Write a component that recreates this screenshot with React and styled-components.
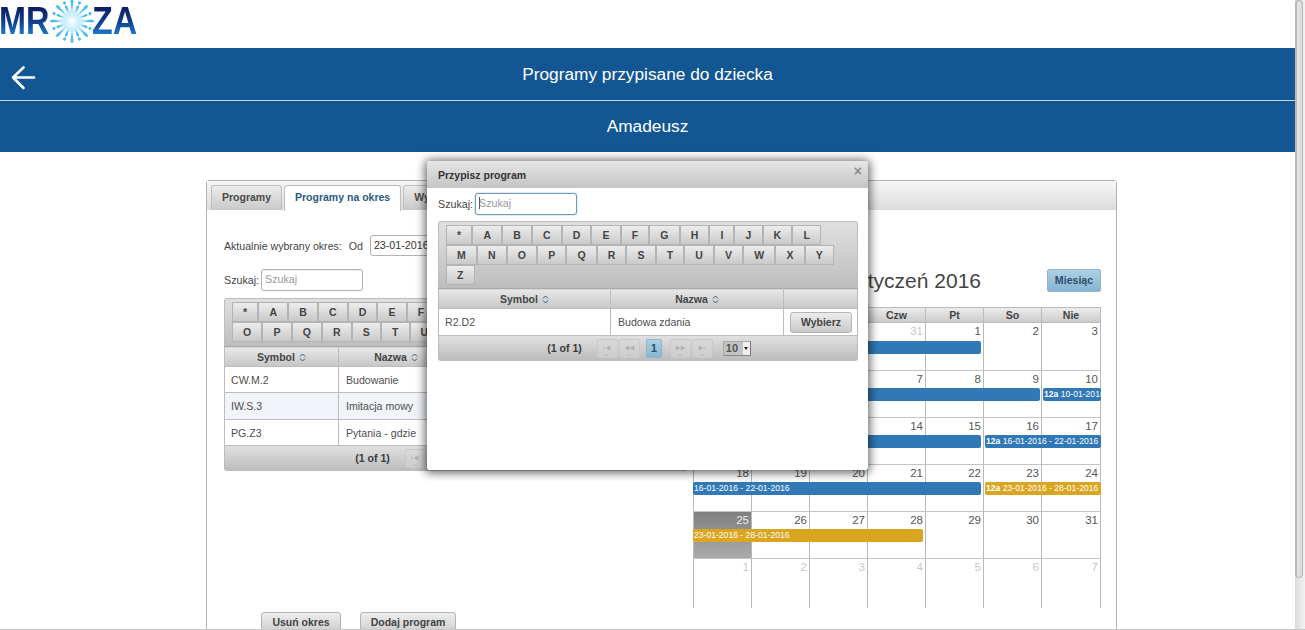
import React from 'react';
import styled, { createGlobalStyle } from 'styled-components';

const Global = createGlobalStyle`
  html, body { margin: 0; padding: 0; height: 630px; overflow: hidden; background: #fff; }
  body { font-family: "Liberation Sans", Arial, sans-serif; color: #444; }
  * { box-sizing: border-box; }
`;

const btnGrad = 'linear-gradient(to bottom, #ededed, #c9c9c9)';
const activeGrad = 'linear-gradient(to bottom, #aed0e4, #86b4d0)';

const Viewport = styled.div`
  position: relative; width: 1305px; height: 630px; overflow: hidden;
  display: flex; flex-direction: column;
`;
const Window = styled.div`display: flex; height: 629px; overflow: hidden;`;
const WindowEdge = styled.div`height: 1px; background: #c8c8c8;`;
const Page = styled.main`width: 1295px; flex: none; overflow: hidden;`;
const Scrollbar = styled.div`
  width: 10px; height: 629px; flex: none;
  background: linear-gradient(to right, #dcdcdc, #f2f2f2);
`;
const ScrollThumb = styled.div`
  width: 8px; height: 578px; border: 1px solid #b9b9b9; border-left-width: 2px; border-top-width: 1px;
  border-radius: 4px; background: linear-gradient(to right, #e6e6e6, #d8d8d8);
`;

const LogoBar = styled.div`height: 48px; display: flex; align-items: flex-start; background: #fff;`;
const LogoWord = styled.div`
  width: ${p => p.$w}px; height: 48px; flex: none; overflow: visible;
`;
const LogoText = styled.span`
  display: inline-block; transform-origin: 0 0; transform: translateX(${p => p.$dx || 0}px) scaleX(${p => p.$sx});
  font: bold 39px/42px "Liberation Sans", sans-serif; white-space: nowrap;
  background: linear-gradient(to bottom, #0b1f66 20%, #0f3c8a 50%, #1b79cc 82%);
  -webkit-background-clip: text; background-clip: text; color: transparent;
`;
const Flake = styled.svg`width: 50px; height: 48px; flex: none; margin-right: -5px; margin-left: -3px;`;

const Band = styled.header`
  background: #125694; color: #fff; position: relative;
  display: flex; align-items: center; justify-content: center;
  font-size: 17.3px; border-bottom: ${p => p.$rule ? '1px solid #c9d6e3' : '0'};
  height: ${p => p.$rule ? 53 : 51}px;
`;
const BackIcon = styled.svg`position: absolute; left: 10px; top: 17px; width: 26px; height: 26px;`;

const Panel = styled.section`
  margin: 28px 0 0 206px; width: 911px; height: 480px;
  border: 1px solid #b4b4b4; border-radius: 3px; background: #fff;
`;
const TabStrip = styled.nav`
  height: 29px; padding: 4px 0 0 4px; display: flex; gap: 2px;
  background: linear-gradient(to bottom, #f6f6f6, #dcdcdc);
`;
const Tab = styled.div`
  height: ${p => p.$active ? 26 : 25}px; padding: 0 10px; line-height: 23px;
  border: 1px solid #bdbdbd; border-bottom: 0; border-radius: 3px 3px 0 0;
  font-size: 10.5px; font-weight: bold;
  color: ${p => p.$active ? '#2b5a80' : '#4a4a4a'};
  background: ${p => p.$active ? '#fff' : 'linear-gradient(to bottom, #ececec, #c9c9c9)'};
`;
const Columns = styled.div`
  display: grid; grid-template-columns: 464px 408px; column-gap: 5px;
  padding: 25px 0 0 17px;
`;
const LeftCol = styled.div`min-width: 0;`;
const RightCol = styled.div`min-width: 0; padding-top: 34px;`;

const PeriodRow = styled.div`display: flex; align-items: center; height: 21px; font-size: 10.6px; gap: 7px;`;
const DateInput = styled.div`
  width: 100px; height: 21px; margin-left: 0; border: 1px solid #b4b4b4; border-radius: 3px;
  padding-left: 3px; line-height: 19px; font-size: 10.7px; color: #333;
`;
const SearchRow = styled.div`
  display: flex; align-items: center; gap: 2px; height: 22px; font-size: 10.7px;
  margin-top: ${p => p.$top}px;
`;
const SearchInput = styled.div`
  width: 102px; height: 22px; border-radius: 3px; padding-left: 3px; line-height: 19px;
  font-size: 10.7px; color: #999; background: #fff;
  border: 1px solid ${p => p.$focus ? '#6c9dbf' : '#b0b0b0'};
  box-shadow: ${p => p.$focus ? '0 0 2px #8fb8d4' : 'inset 0 1px 1px #eee'};
`;
const Caret = styled.span`border-left: 1px solid #555; margin-right: -1px;`;

const AlphaBar = styled.div`
  margin-top: ${p => p.$top}px; padding: 3px 12px ${p => p.$tail}px 7px;
  display: flex; flex-wrap: wrap; align-content: flex-start;
  border: 1px solid #bdbdbd; border-bottom: 0; border-radius: 3px 3px 0 0;
  background: linear-gradient(to bottom, #e0e0e0, #bdbdbd);
`;
const Letter = styled.div`
  height: 20px; padding: 0 10.1px; line-height: 18px; text-align: center;
  font-size: 10.5px; font-weight: bold; color: #444;
  border: 1px solid #b4b4b4; background: ${btnGrad};
`;

const Table = styled.table`
  width: 100%; table-layout: fixed; border-collapse: collapse; font-size: 10.6px;
  border-left: 1px solid #bdbdbd; border-right: 1px solid #bdbdbd;
`;
const HeadCell = styled.th`
  width: ${p => p.$w ? `${p.$w}px` : 'auto'}; height: 20px; padding: 0;
  font-size: 10.5px; font-weight: bold; color: #444; text-align: center;
  background: linear-gradient(to bottom, #e8e8e8, #c6c6c6);
  border: 1px solid #bdbdbd; border-top-color: #aaa;
  &:first-child { border-left: 0; } &:last-child { border-right: 0; }
`;
const SortIcon = styled.svg`width: 7px; height: 9px; margin-left: 4px; vertical-align: -1px;`;
const Row = styled.tr`background: ${p => p.$alt ? '#f1f4f9' : '#fff'};`;
const Cell = styled.td`
  height: ${p => p.$h}px; padding: 0 7px; color: #4e4e4e;
  border: 1px solid #bdbdbd; overflow: hidden; white-space: nowrap;
  &:first-child { border-left: 0; padding-left: 6px; } &:last-child { border-right: 0; }
`;
const ActionCell = styled(Cell)`padding: 0; text-align: center;`;
const ChooseBtn = styled.button`
  width: 62px; height: 21px; padding: 0; margin: 0 0 0 1px; border: 1px solid #b4b4b4; border-radius: 3px;
  background: ${btnGrad}; font: bold 10.5px "Liberation Sans", sans-serif; color: #444;
`;

const Pager = styled.div`
  height: 25px; display: flex; align-items: center; justify-content: center;
  border: 1px solid #bdbdbd; border-top: 0; border-radius: 0 0 3px 3px;
  background: linear-gradient(to bottom, #e0e0e0, #bdbdbd);
  font-size: 10.6px; font-weight: bold; color: #3c3c3c;
`;
const PagerCount = styled.span`margin: 0 15px 0 2px;`;
const PagerBtn = styled.svg`
  width: 21px; height: 19px; margin-right: ${p => p.$gap}px; flex: none;
  border: 1px solid #c9c9c9; border-radius: 2px; background: linear-gradient(to bottom, #d9d9d9, #cdcdcd);
`;
const PageNo = styled.div`
  width: 16px; height: 19px; margin-right: 8px; text-align: center; line-height: 17px;
  background: ${activeGrad}; border: 1px solid #8fb4cd; border-radius: 2px; color: #24506f;
`;
const PageSize = styled.div`
  width: 28px; height: 15px; margin-left: 10px; display: flex; align-items: stretch;
  background: #c4c4c4; border: 1px solid #a8a8a8; border-bottom-color: #888; border-right-color: #777;
  color: #555; line-height: 13px; padding-left: 2px; justify-content: space-between; font-size: 11px;
`;
const PageSizeArrow = styled.div`
  width: 7px; background: #eee; display: flex; align-items: center; justify-content: center;
  &::after { content: ''; border: 2px solid transparent; border-top: 3px solid #222; border-bottom: 0; }
`;

const CalBar = styled.div`height: 23px; display: flex; justify-content: flex-end; align-items: center;`;
const CalTitle = styled.h2`
  margin: 0 66px 0 0; font-size: 21px; font-weight: normal; color: #444; line-height: 23px;
`;
const ViewBtn = styled.div`
  width: 54px; height: 23px; text-align: center; line-height: 21px; font-size: 10.6px; font-weight: bold;
  color: #2c4f68; background: ${activeGrad}; border: 1px solid #8fb4cd; border-radius: 2px;
`;
const Calendar = styled.div`margin-top: 15px; width: 408px;`;
const cols = 'repeat(6, 58px) 60px';
const DayNames = styled.div`display: grid; grid-template-columns: ${cols}; height: 16px;`;
const DayName = styled.div`
  text-align: center; font-size: 10.6px; font-weight: bold; color: #444; line-height: 14px;
  border: 1px solid #bbb; border-right: 0; background: linear-gradient(to bottom, #ececec, #cbcbcb);
  &:last-child { border-right: 1px solid #bbb; }
`;
const Week = styled.div`
  display: grid; grid-template-columns: ${cols}; grid-template-rows: 18px 13px 1fr;
  height: ${p => p.$h}px; overflow: hidden;
`;
const Day = styled.div`
  grid-row: 1 / 4; grid-column: ${p => p.$col}; text-align: right; padding: 2px 2px 0 0;
  font-size: 11.5px; line-height: 13px; color: ${p => p.$dim ? '#c8c8c8' : '#555'};
  border-left: 1px solid #b9b9b9; border-top: 1px solid #c4c4c4;
  ${p => p.$col === 7 && 'border-right: 1px solid #b9b9b9;'}
  ${p => p.$top0 && 'border-top: 0;'}
  ${p => p.$today && 'background: linear-gradient(to bottom, #7f7f7f, #ababab); color: #eee;'}
`;
const Event = styled.div`
  grid-row: 2; grid-column: ${p => p.$from} / ${p => p.$to};
  margin: 0 ${p => p.$mr || 0}px 0 ${p => p.$ml || 0}px; z-index: 1;
  height: 13px; padding-left: 1px; overflow: hidden; white-space: nowrap;
  font-size: 8.6px; line-height: 13px; color: #fff;
  border-radius: 2px; background: ${p => p.$gold ? '#daa520' : '#3079b6'};
  b { font-weight: bold; }
`;

const BottomBar = styled.div`display: flex; gap: 19px; padding: 4px 0 0 54px;`;
const ActionBtn = styled.div`
  width: ${p => p.$w}px; height: 24px; text-align: center; line-height: 18px;
  font-size: 10.5px; font-weight: bold; color: #444;
  border: 1px solid #b4b4b4; border-radius: 3px; background: ${btnGrad};
`;

const Modal = styled.div`
  position: absolute; left: 427px; top: 161px; width: 441px; height: 309px; z-index: 5;
  background: #fff; border-radius: 3px; box-shadow: 0 1px 10px 2px rgba(0,0,0,.6);
`;
const ModalHead = styled.div`
  height: 27px; padding: 0 6px 0 11px; display: flex; justify-content: space-between; align-items: center;
  background: linear-gradient(to bottom, #e6e6e6, #c4c4c4); border-radius: 3px 3px 0 0;
  font-size: 10.5px; font-weight: bold; color: #333;
`;
const CloseX = styled.span`font-size: 14px; font-weight: bold; color: #8a8a8a; margin-top: -7px;`;
const ModalBody = styled.div`padding: 5px 10px 0 11px;`;

const rays = Array.from({ length: 16 }, (_, i) => i * 22.5);
function LogoFlake() {
  return (
    <Flake viewBox="0 0 50 48" aria-hidden="true">
      <defs>
        <radialGradient id="glow"><stop offset="0" stopColor="#fff" /><stop offset=".6" stopColor="#c8eefb" /><stop offset="1" stopColor="#9fe0f6" stopOpacity="0" /></radialGradient>
      </defs>
      <circle cx="25" cy="21" r="13" fill="url(#glow)" />
      {rays.map((a, i) => (
        <g key={a} transform={`rotate(${a} 25 21)`}>
          <path d={i % 2 ? 'M25 12 L23.6 6 Q25 2 26.4 6 Z' : 'M25 12 L23.4 1 Q25 -3.5 26.6 1 Z'} fill="#4fc0ec" />
          {i % 2 === 1 && <circle cx="25" cy="1.5" r="1.6" fill="#4fc0ec" />}
        </g>
      ))}
    </Flake>
  );
}

const Sort = () => (
  <SortIcon viewBox="0 0 7 9" aria-hidden="true">
    <path d="M1 3.5 L3.5 1 L6 3.5 M1 5.5 L3.5 8 L6 5.5" fill="none" stroke="#2f5a7c" strokeWidth="1" />
  </SortIcon>
);

const pagerIcons = {
  first: 'M6 6v4 M12 6 L8 8 L12 10 Z',
  prev: 'M9 6 L5 8 L9 10 Z M14 6 L10 8 L14 10 Z',
  next: 'M5 6 L9 8 L5 10 Z M10 6 L14 8 L10 10 Z',
  last: 'M6 6 L10 8 L6 10 Z M12 6v4',
};
const PagerIcon = ({ kind, gap }) => (
  <PagerBtn $gap={gap} viewBox="0 0 19 17" aria-hidden="true">
    <path d={pagerIcons[kind]} fill="#b0b0b0" stroke="#b0b0b0" strokeWidth=".6" />
    <path d="M7 15h4" stroke="#b8b8b8" strokeWidth="1" />
  </PagerBtn>
);

const PagerBar = () => (
  <Pager>
    <PagerCount>(1 of 1)</PagerCount>
    <PagerIcon kind="first" gap={1} />
    <PagerIcon kind="prev" gap={6} />
    <PageNo>1</PageNo>
    <PagerIcon kind="next" gap={1} />
    <PagerIcon kind="last" gap={0} />
    <PageSize>10<PageSizeArrow /></PageSize>
  </Pager>
);

const letters = ['*', ...'ABCDEFGHIJKLMNOPQRSTUVWXYZ'];
const Alpha = ({ top, tail }) => (
  <AlphaBar $top={top} $tail={tail}>
    {letters.map(l => <Letter key={l}>{l}</Letter>)}
  </AlphaBar>
);

const weeks = [
  { h: 47, days: [28, 29, 30, 31, 1, 2, 3], dimTo: 4, first: true, events: [{ from: 1, to: 6, mr: 2 }] },
  { h: 47, days: [4, 5, 6, 7, 8, 9, 10], events: [{ from: 1, to: 7, mr: 1 }, { from: 7, to: 8, ml: 2, t: '10-01-2016 - 15-01-2016', hour: true }] },
  { h: 47, days: [11, 12, 13, 14, 15, 16, 17], events: [{ from: 1, to: 6, mr: 2 }, { from: 6, to: 8, ml: 2, t: '16-01-2016 - 22-01-2016', hour: true }] },
  { h: 47, days: [18, 19, 20, 21, 22, 23, 24], events: [{ from: 1, to: 6, mr: 2, t: '16-01-2016 - 22-01-2016' }, { from: 6, to: 8, ml: 2, gold: true, t: '23-01-2016 - 28-01-2016', hour: true }] },
  { h: 47, days: [25, 26, 27, 28, 29, 30, 31], today: 0, events: [{ from: 1, to: 5, mr: 2, gold: true, t: '23-01-2016 - 28-01-2016' }] },
  { h: 50, days: [1, 2, 3, 4, 5, 6, 7], allDim: true, events: [] },
];

export default function App() {
  return (
    <Viewport>
      <Global />
      <Window>
        <Page>
          <LogoBar>
            <LogoWord $w={50}><LogoText $sx={0.83} $dx={-1}>MR</LogoText></LogoWord>
            <LogoFlake />
            <LogoWord $w={46}><LogoText $sx={0.87} $dx={0}>ZA</LogoText></LogoWord>
          </LogoBar>
          <Band $rule>
            <BackIcon viewBox="0 0 26 26" aria-hidden="true">
              <path d="M3 12.5 H24 M13.5 2.5 L3 12.5 L13.5 23" fill="none" stroke="#fff" strokeWidth="2.6" strokeLinecap="round" strokeLinejoin="round" />
            </BackIcon>
            Programy przypisane do dziecka
          </Band>
          <Band>Amadeusz</Band>
          <Panel>
            <TabStrip>
              <Tab>Programy</Tab>
              <Tab $active>Programy na okres</Tab>
              <Tab>Wybrane programy</Tab>
            </TabStrip>
            <Columns>
              <LeftCol>
                <PeriodRow>
                  <span>Aktualnie wybrany okres:</span>
                  <span>Od</span>
                  <DateInput>23-01-2016</DateInput>
                </PeriodRow>
                <SearchRow $top={13}>Szukaj: <SearchInput>Szukaj</SearchInput></SearchRow>
                <Alpha top={7} tail={4} />
                <Table>
                  <thead>
                    <tr><HeadCell $w={114}>Symbol<Sort /></HeadCell><HeadCell $w={115}>Nazwa<Sort /></HeadCell><HeadCell /></tr>
                  </thead>
                  <tbody>
                    <Row><Cell $h={26}>CW.M.2</Cell><Cell $h={26}>Budowanie</Cell><ActionCell $h={26} /></Row>
                    <Row $alt><Cell $h={27}>IW.S.3</Cell><Cell $h={27}>Imitacja mowy</Cell><ActionCell $h={27} /></Row>
                    <Row><Cell $h={26}>PG.Z3</Cell><Cell $h={26}>Pytania - gdzie</Cell><ActionCell $h={26} /></Row>
                  </tbody>
                </Table>
                <PagerBar />
              </LeftCol>
              <RightCol>
                <CalBar>
                  <CalTitle>Styczeń 2016</CalTitle>
                  <ViewBtn>Miesiąc</ViewBtn>
                </CalBar>
                <Calendar>
                  <DayNames>
                    {['Pon', 'Wt', 'Śr', 'Czw', 'Pt', 'So', 'Nie'].map(d => <DayName key={d}>{d}</DayName>)}
                  </DayNames>
                  {weeks.map((w, wi) => (
                    <Week key={wi} $h={w.h}>
                      {w.days.map((d, i) => (
                        <Day key={i} $col={i + 1} $top0={w.first}
                          $dim={w.allDim || (w.dimTo && i < w.dimTo)} $today={w.today === i}>{d}</Day>
                      ))}
                      {w.events.map((e, i) => (
                        <Event key={i} $from={e.from} $to={e.to} $mr={e.mr} $ml={e.ml} $gold={e.gold}>
                          {e.hour && <b>12a </b>}{e.t}
                        </Event>
                      ))}
                    </Week>
                  ))}
                </Calendar>
              </RightCol>
            </Columns>
            <BottomBar>
              <ActionBtn $w={80}>Usuń okres</ActionBtn>
              <ActionBtn $w={96}>Dodaj program</ActionBtn>
            </BottomBar>
          </Panel>
        </Page>
        <Scrollbar><ScrollThumb /></Scrollbar>
      </Window>
      <WindowEdge />
      <Modal>
        <ModalHead>Przypisz program<CloseX>×</CloseX></ModalHead>
        <ModalBody>
          <SearchRow $top={0}>Szukaj: <SearchInput $focus><Caret />Szukaj</SearchInput></SearchRow>
          <Alpha top={6} tail={3} />
          <Table>
            <thead>
              <tr><HeadCell $w={172}>Symbol<Sort /></HeadCell><HeadCell $w={173}>Nazwa<Sort /></HeadCell><HeadCell /></tr>
            </thead>
            <tbody>
              <Row>
                <Cell $h={27}>R2.D2</Cell><Cell $h={27}>Budowa zdania</Cell>
                <ActionCell $h={27}><ChooseBtn>Wybierz</ChooseBtn></ActionCell>
              </Row>
            </tbody>
          </Table>
          <PagerBar />
        </ModalBody>
      </Modal>
    </Viewport>
  );
}
